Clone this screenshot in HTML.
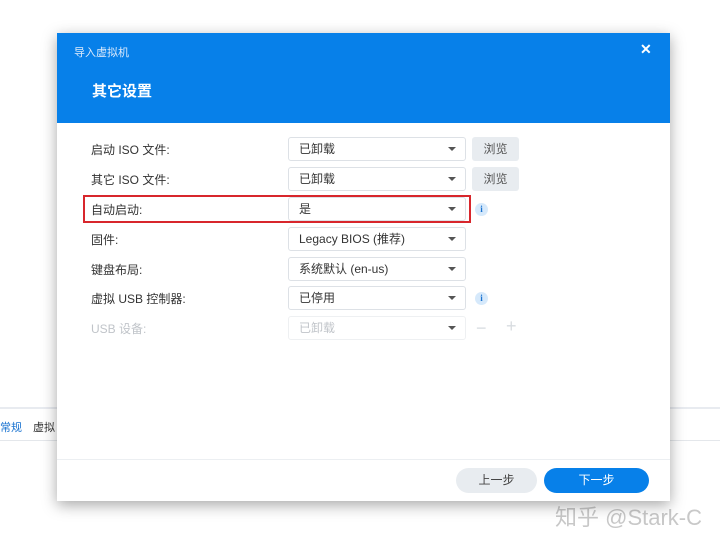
<!DOCTYPE html>
<html><head><meta charset="utf-8"><style>
body{margin:0;width:720px;height:541px;background:#fff;position:relative;overflow:hidden;font-family:"Liberation Sans","Noto Sans CJK SC",sans-serif;}
.a{position:absolute}
.dlg{left:57px;top:33px;width:613px;height:468px;background:#fff;box-shadow:0 4px 14px rgba(0,0,0,.35);}
.hd{left:0;top:0;width:613px;height:90px;background:#0780e9;}
.lbl{left:91px;font-size:12px;color:#333;}
.sel{left:288px;width:178px;height:24px;border:1px solid #dde1e6;border-radius:3px;background:#fff;font-size:12px;color:#333;box-sizing:border-box;padding-left:10px;line-height:22px;}
.sel:after{content:"";position:absolute;right:9px;top:9px;border-left:4px solid transparent;border-right:4px solid transparent;border-top:4px solid #555;}
.br{left:472px;width:47px;height:24px;background:#e8ecf0;border-radius:3px;font-size:12px;color:#555;text-align:center;line-height:24px;}
.i{left:475px;width:13px;height:13px;border-radius:50%;background:#d6e9fb;color:#1a73d0;font-size:9px;font-weight:bold;text-align:center;line-height:13px;font-family:"Liberation Serif",serif;}
</style></head><body>
<div class="a" style="left:0;top:407px;width:720px;height:2px;background:#e8ebf0"></div>
<div class="a" style="left:0;top:440px;width:720px;height:1px;background:#e4e7eb"></div>
<div class="a" style="left:0;top:419px;font-size:11px;color:#1a73d0">常规</div>
<div class="a" style="left:33px;top:419px;font-size:11px;color:#333">虚拟</div>
<div class="a" style="left:555px;top:500px;font-size:22px;color:#c8c8c8">知乎 @Stark-C</div>
<div class="a dlg">
 <div class="a hd"></div>
 <div class="a" style="left:17px;top:11px;font-size:11px;color:#dbe9fb">导入虚拟机</div>
 <div class="a" style="left:583px;top:8px;font-size:14px;color:#fff;font-weight:bold">✕</div>
 <div class="a" style="left:35px;top:47px;font-size:15px;color:#fff;font-weight:bold">其它设置</div>
 <div class="a" style="left:0;top:426px;width:613px;height:1px;background:#eceff2"></div>
 <div class="a" style="left:399px;top:435px;width:81px;height:25px;border-radius:13px;background:#e8ecf0;font-size:12px;color:#444;text-align:center;line-height:25px">上一步</div>
 <div class="a" style="left:487px;top:435px;width:105px;height:25px;border-radius:13px;background:#0780e9;font-size:12px;color:#fff;text-align:center;line-height:25px">下一步</div>
</div>
<div class="a lbl" style="top:141px">启动 ISO 文件:</div>
<div class="a sel" style="top:137px">已卸载</div><div class="a br" style="top:137px">浏览</div>
<div class="a lbl" style="top:171px">其它 ISO 文件:</div>
<div class="a sel" style="top:167px">已卸载</div><div class="a br" style="top:167px">浏览</div>
<div class="a lbl" style="top:201px">自动启动:</div>
<div class="a sel" style="top:197px">是</div><div class="a i" style="top:203px">i</div>
<div class="a" style="left:83px;top:195px;width:384px;height:24px;border:2px solid #d8262c"></div>
<div class="a lbl" style="top:231px">固件:</div>
<div class="a sel" style="top:227px">Legacy BIOS (推荐)</div>
<div class="a lbl" style="top:261px">键盘布局:</div>
<div class="a sel" style="top:257px">系统默认 (en-us)</div>
<div class="a lbl" style="top:290px">虚拟 USB 控制器:</div>
<div class="a sel" style="top:286px">已停用</div><div class="a i" style="top:292px">i</div>
<div class="a lbl" style="top:320px;color:#c0c4c9">USB 设备:</div>
<div class="a sel" style="top:316px;color:#c0c4c9;border-color:#eef0f2">已卸载</div>
<div class="a" style="left:476px;top:318px;font-size:18px;color:#d8dce0">−</div>
<div class="a" style="left:506px;top:316px;font-size:18px;color:#d8dce0">+</div>
</body></html>
